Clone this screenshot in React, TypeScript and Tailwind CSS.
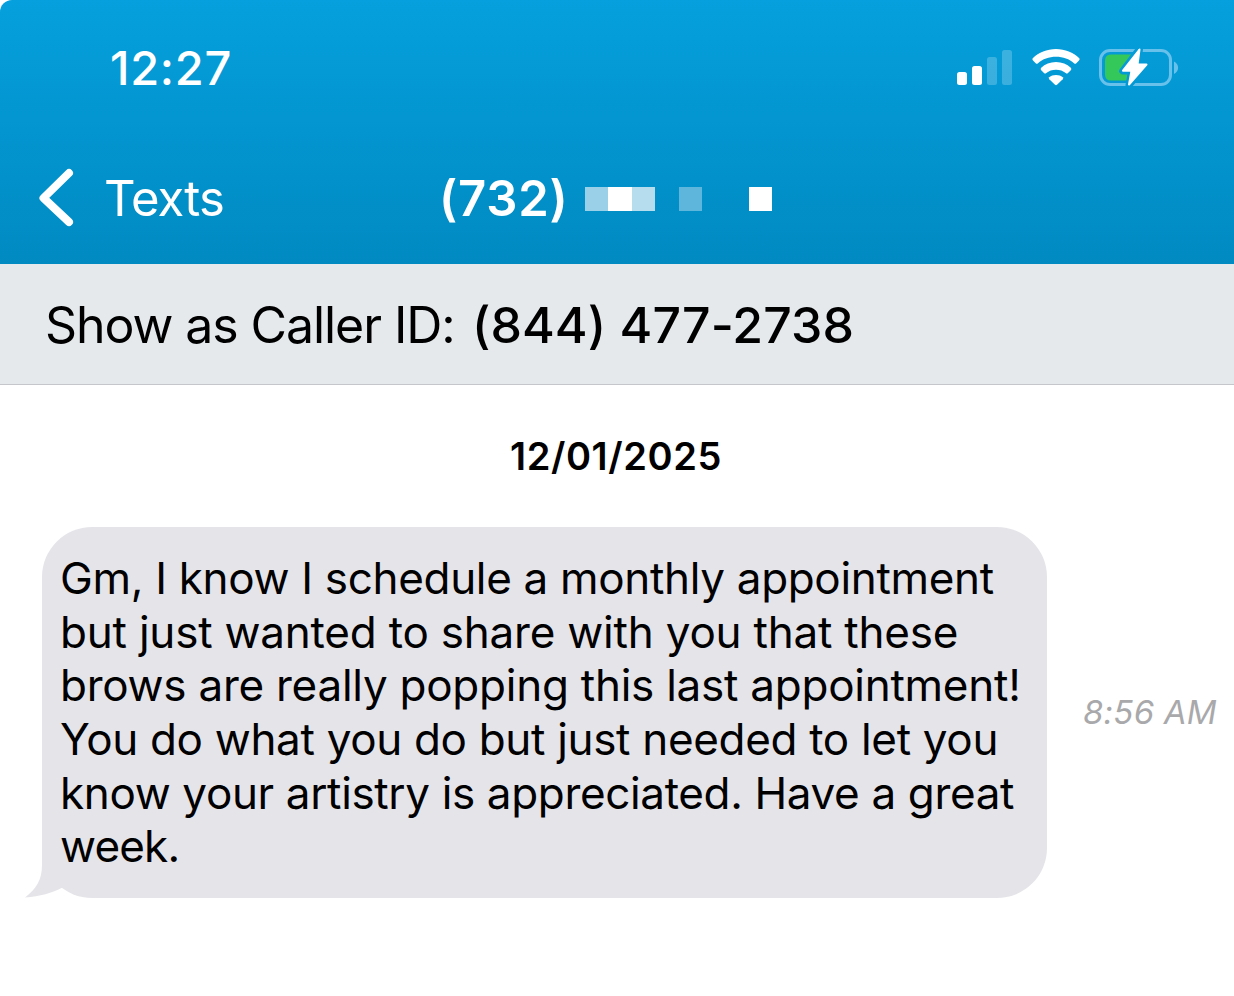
import React from "react";

const messageLines = [
  { text: "Gm, I know I schedule a monthly appointment", tracking: "tracking-[-0.320px]" },
  { text: "but just wanted to share with you that these", tracking: "tracking-[-0.210px]" },
  { text: "brows are really popping this last appointment!", tracking: "tracking-[-0.250px]" },
  { text: "You do what you do but just needed to let you", tracking: "tracking-[-0.320px]" },
  { text: "know your artistry is appreciated. Have a great", tracking: "tracking-[-0.350px]" },
  { text: "week.", tracking: "tracking-[-0.800px]" },
];

// blocks that hide the rest of the phone number
const maskBlocks = [
  "bg-[#9bd0e9]",
  "bg-white",
  "bg-[#b5dded]",
  "bg-transparent",
  "bg-[#5fb6dd]",
  "bg-transparent",
  "bg-transparent",
  "bg-white",
];

function SignalIcon() {
  return (
    <svg width="56" height="38" viewBox="0 0 56 38" fill="white">
      <rect x="0" y="23" width="10" height="13" rx="2.5" />
      <rect x="15" y="17" width="10" height="19" rx="2.5" />
      <rect x="30" y="8" width="10" height="28" rx="2.5" opacity="0.22" />
      <rect x="45" y="1" width="10" height="35" rx="2.5" opacity="0.22" />
    </svg>
  );
}

function WifiIcon() {
  return (
    <svg width="48" height="38" viewBox="0 0 48 38" fill="white">
      <path d="M24 0C33 0 41.500 3.500 47 9Q48.200 10.200 47 11.400L44.300 14.200Q43.200 15.300 42 14.200C37.500 10.200 31 7.800 24 7.800S10.500 10.200 6 14.200Q4.800 15.300 3.700 14.200L1 11.400Q-.2 10.200 1 9C6.500 3.500 15 0 24 0Z" />
      <path d="M24 13C29.800 13 35 15.200 38.800 18.800Q40 20 38.800 21.200L36 24Q34.900 25 33.700 24C31.200 21.900 27.800 20.700 24 20.700S16.800 21.900 14.300 24Q13.100 25 12 24L9.200 21.200Q8 20 9.200 18.800C13 15.200 18.200 13 24 13Z" />
      <path d="M24 26C26.800 26 29 26.800 30.700 28.200Q31.700 29.200 30.700 30.300L25 35.700Q24 36.600 23 35.700L17.300 30.300Q16.300 29.200 17.300 28.200C19 26.800 21.200 26 24 26Z" />
    </svg>
  );
}

function BatteryIcon() {
  return (
    <svg width="80" height="42" viewBox="0 0 80 42" fill="none">
      <mask id="bolt-gap">
        <rect width="80" height="42" fill="white" />
        <path
          d="M40.500 2L23.700 24H32.500L30 38L48 17.500H38.500Z"
          fill="black"
          stroke="black"
          strokeWidth="7"
          strokeLinejoin="round"
        />
      </mask>
      <g mask="url(#bolt-gap)">
        <rect x="1.500" y="3.500" width="70" height="34" rx="9.500" stroke="#68c1ea" strokeWidth="3" />
        <path d="M12 7.500H33V33.500H12Q6 33.500 6 27.500V13.500Q6 7.500 12 7.500Z" fill="#34c759" />
      </g>
      <path d="M75 14.500C80.500 17 80.500 24.500 75 27Z" fill="#68c1ea" />
      <path
        d="M40.500 2.500L24 23.700H32.500L30 37.500L47.500 17.500H38.500Z"
        fill="white"
        stroke="white"
        strokeWidth="2"
        strokeLinejoin="round"
      />
    </svg>
  );
}

function StatusBar() {
  return (
    <div className="flex h-[136px] items-center justify-between pl-[110px] pr-[55px]">
      <span className="pb-0.5 text-[47px] font-[540] leading-none tracking-[0.700px]">12:27</span>
      <div className="flex items-center">
        <SignalIcon />
        <div className="ml-[19px]">
          <WifiIcon />
        </div>
        <div className="ml-[19px]">
          <BatteryIcon />
        </div>
      </div>
    </div>
  );
}

function NavBar() {
  return (
    <div className="flex h-[128px] items-center pb-1 pl-[38px]">
      <svg width="38" height="60" viewBox="0 0 38 60" fill="none">
        <path
          d="M31 5L5.500 30L31 54"
          stroke="white"
          strokeWidth="8"
          strokeLinecap="round"
          strokeLinejoin="round"
        />
      </svg>
      <span className="ml-[28px] w-[335px] text-[49px] leading-none tracking-[-0.900px]">
        Texts
      </span>
      <span className="w-[146px] whitespace-nowrap text-[49px] font-[560] leading-none tracking-[0.800px]">
        (732)
      </span>
      <div className="flex pt-px">
        {maskBlocks.map((color, i) => (
          <div key={i} className={`h-6 w-[23.400px] ${color}`} />
        ))}
      </div>
    </div>
  );
}

function MessageBubble() {
  return (
    <div className="relative h-[371px] w-[1005px] shrink-0 rounded-[50px] bg-[#e5e4e9] pl-[18px] pt-[25px]">
      <svg
        className="absolute -left-[18px] bottom-0"
        width="50"
        height="60"
        viewBox="0 0 50 60"
        fill="#e5e4e9"
      >
        <path d="M18 10V27C18 42 12 51 1 59.500C16 58.500 28 55 38.500 49.500L40 20Z" />
      </svg>
      {messageLines.map((line) => (
        <p
          key={line.text}
          className={`relative whitespace-nowrap text-[44px] leading-[53.650px] ${line.tracking}`}
        >
          {line.text}
        </p>
      ))}
    </div>
  );
}

export default function App() {
  return (
    <div className="h-[996px] w-[1234px] overflow-hidden bg-white font-['Inter',sans-serif] text-black">
      <header className="h-[264px] rounded-tl-[12px] bg-linear-to-b from-[#05a0dd] to-[#018ac2] text-white">
        <StatusBar />
        <NavBar />
      </header>
      <div className="flex h-[121px] items-center border-b border-[#c4c6cb] bg-[#e5e9ec] pl-[45px] pt-0.5 text-[50px] leading-none">
        <span className="w-[427px] whitespace-nowrap tracking-[-1.080px]">Show as Caller ID:</span>
        <span className="whitespace-nowrap font-medium tracking-[0.050px]">(844) 477-2738</span>
      </div>
      <main>
        <p className="flex h-[142px] items-center justify-center pr-0.5 text-[38px] font-semibold tracking-[0.600px]">
          12/01/2025
        </p>
        <div className="flex items-center pl-[42px]">
          <MessageBubble />
          <span className="ml-[36px] whitespace-nowrap text-[33px] italic leading-none tracking-[0.250px] text-[#a9a9ab]">
            8:56 AM
          </span>
        </div>
      </main>
    </div>
  );
}
